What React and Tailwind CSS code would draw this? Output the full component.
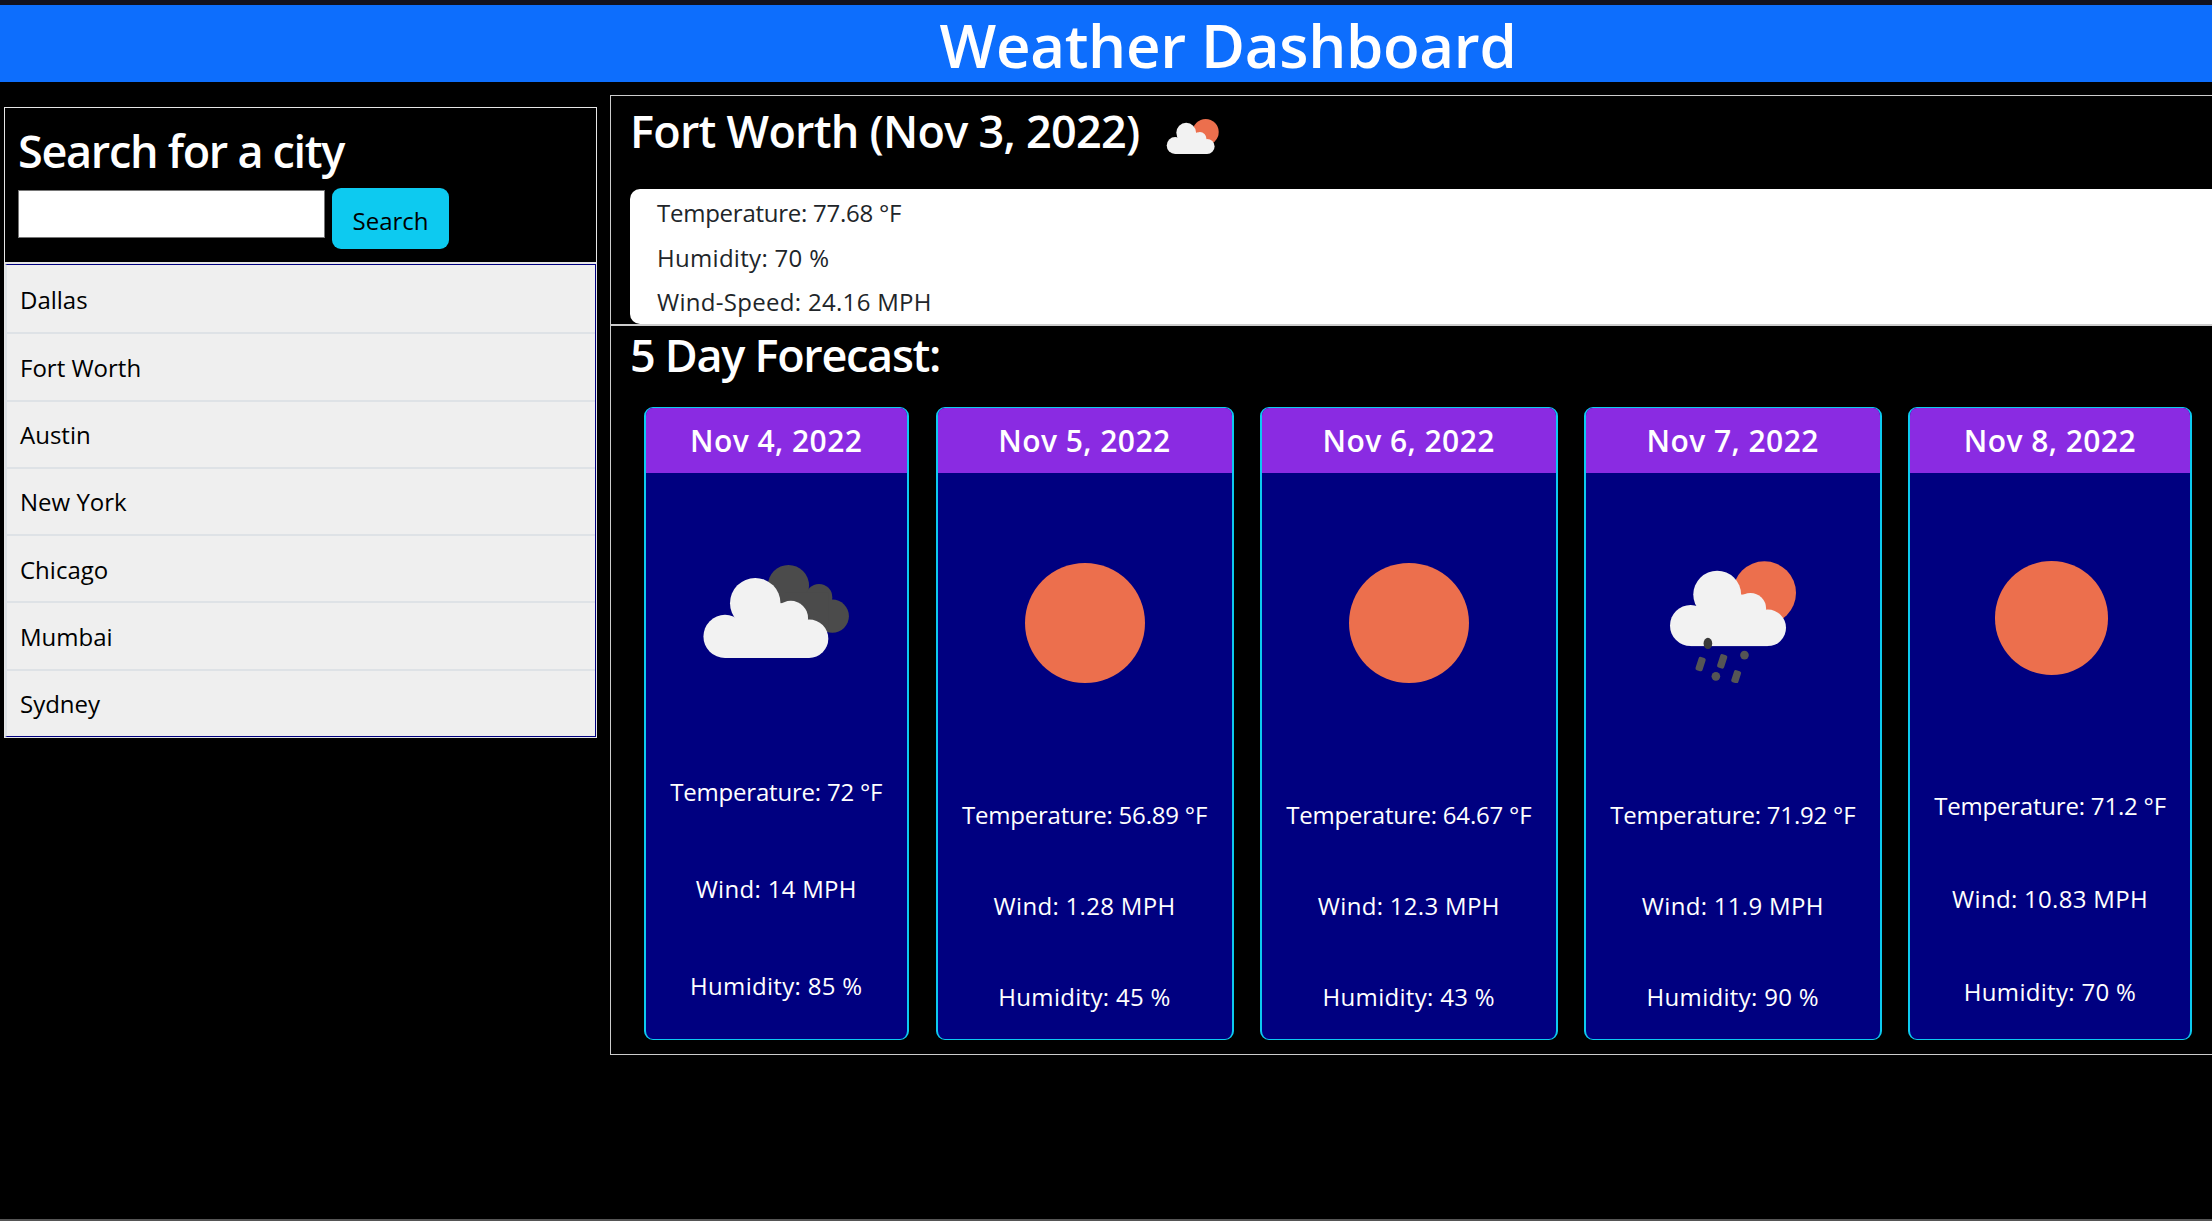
import React from 'react';

const CITIES = ['Dallas', 'Fort Worth', 'Austin', 'New York', 'Chicago', 'Mumbai', 'Sydney'];

// each card differs a little: the source page sized them from their content
const FORECAST = [
  { date: 'Nov 4, 2022', icon: 'clouds', width: 'w-[265.5px]', gap: 'gap-[61px]', top: 'pt-[92px]', textTop: 'mt-[116px]', temp: '72', wind: '14', humidity: '85' },
  { date: 'Nov 5, 2022', icon: 'sun', width: 'w-[298px]', gap: 'gap-[55px]', top: 'pt-[90px]', textTop: 'mt-[114px]', temp: '56.89', wind: '1.28', humidity: '45' },
  { date: 'Nov 6, 2022', icon: 'sun', width: 'w-[297.5px]', gap: 'gap-[55px]', top: 'pt-[90px]', textTop: 'mt-[114px]', temp: '64.67', wind: '12.3', humidity: '43' },
  { date: 'Nov 7, 2022', icon: 'rain', width: 'w-[297.5px]', gap: 'gap-[55px]', top: 'pt-[88px]', textTop: 'mt-[114px]', temp: '71.92', wind: '11.9', humidity: '90' },
  { date: 'Nov 8, 2022', icon: 'smallSun', width: 'w-[284px]', gap: 'gap-[57px]', top: 'pt-[88px]', textTop: 'mt-[113px]', temp: '71.2', wind: '10.83', humidity: '70' },
];

function SunCloud({ width, height, rain }) {
  return (
    <svg width={width} height={height} viewBox={rain ? '150 90 382 365' : '150 90 382 255'}>
      <circle cx="437" cy="185" r="95" fill="#ec6f4d" />
      <g fill="#f2f2f2">
        <circle cx="215" cy="283" r="62" />
        <circle cx="295" cy="190" r="72" />
        <circle cx="395" cy="232" r="47" />
        <circle cx="447" cy="290" r="55" />
        <rect x="215" y="255" width="232" height="90" />
        <rect x="260" y="190" width="120" height="70" />
      </g>
      {rain && (
        <g fill="#555555">
          <ellipse cx="267" cy="337" rx="13" ry="17" fill="#3a3a3a" />
          <rect x="234" y="378" width="22" height="42" rx="6" transform="rotate(18 245 399)" />
          <rect x="299" y="370" width="22" height="42" rx="6" transform="rotate(18 310 391)" />
          <circle cx="377" cy="372" r="13" />
          <circle cx="291" cy="436" r="13" />
          <rect x="341" y="418" width="22" height="38" rx="6" transform="rotate(18 352 437)" />
        </g>
      )}
    </svg>
  );
}

function DarkClouds() {
  return (
    <svg width="147" height="93" viewBox="72 68 440 280">
      <g fill="#4b4b4b">
        <circle cx="328" cy="130" r="62" />
        <circle cx="420" cy="165" r="40" />
        <circle cx="460" cy="222" r="50" />
        <rect x="320" y="150" width="130" height="110" />
      </g>
      <g fill="#f2f2f2">
        <circle cx="137" cy="283" r="65" />
        <circle cx="228" cy="183" r="76" />
        <circle cx="335" cy="228" r="52" />
        <circle cx="390" cy="290" r="58" />
        <rect x="137" y="262" width="253" height="86" />
        <rect x="170" y="183" width="170" height="85" />
      </g>
    </svg>
  );
}

function WeatherIcon({ name }) {
  if (name === 'clouds') return <DarkClouds />;
  if (name === 'rain') return <SunCloud width={127} height={122} rain />;
  if (name === 'smallSun') return <div className="ml-[3px] h-[114px] w-[113px] rounded-full bg-[#ec6f4d]" />;
  return <div className="h-[120px] w-[120px] rounded-full bg-[#ec6f4d]" />;
}

function ForecastCard({ day }) {
  return (
    <div className={`${day.width} h-[633px] shrink-0 overflow-hidden rounded-[9px] border-x-2 border-y border-[#0dcaf0] bg-[#000080] text-white`}>
      <div className="flex h-[65px] items-center justify-center bg-[#8a2be2] text-[30px] font-semibold tracking-[0.45px]">
        {day.date}
      </div>
      <div className={`flex flex-col items-center ${day.top}`}>
        <WeatherIcon name={day.icon} />
        <div className={`flex flex-col items-center text-[24px] leading-[36px] tracking-[0.3px] ${day.textTop} ${day.gap}`}>
          <p className="tracking-[-0.2px]">Temperature: {day.temp} °F</p>
          <p>Wind: {day.wind} MPH</p>
          <p>Humidity: {day.humidity} %</p>
        </div>
      </div>
    </div>
  );
}

export default function App() {
  return (
    <div className="h-screen w-full overflow-hidden bg-black font-['Open_Sans',sans-serif]">
      <div className="flex h-full w-[2456px] flex-col">
        <div className="h-[5px] bg-[#12121f]" />

        <header className="flex h-[77px] items-center justify-center bg-[#0d6efd] pt-[2px] text-[60px] font-semibold tracking-[-0.3px] text-white">
          Weather Dashboard
        </header>

        <div className="flex flex-1 items-start">
          {/* left column */}
          <aside className="mt-[25px] ml-[4px] w-[593px] shrink-0 border border-[#e6e6e6]">
            <div className="h-[156px] border-b-2 border-[#e6e6e6] pl-[13px] text-white">
              <h2 className="h-[80px] pt-[7px] text-[45px] leading-[72px] font-semibold tracking-[-1.3px]">Search for a city</h2>
              <div className="flex items-start gap-[7px]">
                <input className="mt-[2px] h-[48px] w-[307px] border border-[#767676] bg-white" />
                <button className="h-[61px] w-[117px] rounded-[9px] bg-[#0dcaf0] pt-[5px] text-[24px] text-black">Search</button>
              </div>
            </div>
            <ul className="border-t border-r border-b border-l-2 border-t-[#000080] border-r-[#000080] border-b-[#000080] border-l-[#dee2e6]">
              {CITIES.map((city, i) => (
                <li key={city} className={`flex h-[67.25px] items-center bg-[#efefef] pt-[2px] pl-[13px] text-[24px] text-black ${i > 0 ? 'border-t-2 border-[#dee2e6]' : ''}`}>
                  {city}
                </li>
              ))}
            </ul>
          </aside>

          {/* right column */}
          <main className="mt-[13px] ml-[13px] flex-1 border border-[#cccccc]">
            <section className="h-[228px]">
              <div className="flex h-[70px] items-center pl-[19px] text-white">
                <h2 className="text-[45px] font-semibold tracking-[-0.75px]">Fort Worth (Nov 3, 2022)</h2>
                <div className="mt-[10px] ml-[27px]">
                  <SunCloud width={53} height={35} />
                </div>
              </div>
              <div className="mt-[23px] ml-[19px] mr-[19px] h-[135px] rounded-[10px] bg-white pl-[27px] text-[24px] leading-[36px] tracking-[0.3px] text-[#212529]">
                <p className="mb-[9px] pt-[6px] tracking-[-0.25px]">Temperature: 77.68 °F</p>
                <p className="mb-[8px]">Humidity: 70 %</p>
                <p>Wind-Speed: 24.16 MPH</p>
              </div>
            </section>

            <section className="border-t-2 border-[#cccccc]">
              <h2 className="flex h-[58px] items-center pl-[19px] text-[45px] font-semibold tracking-[-1.3px] text-white">5 Day Forecast:</h2>
              <div className="mt-[23px] flex gap-[26.5px] pl-[32.5px] pb-[14px]">
                {FORECAST.map((day) => (
                  <ForecastCard key={day.date} day={day} />
                ))}
              </div>
            </section>
          </main>
        </div>

        <div className="h-[2px] bg-[#555555]" />
      </div>
    </div>
  );
}
